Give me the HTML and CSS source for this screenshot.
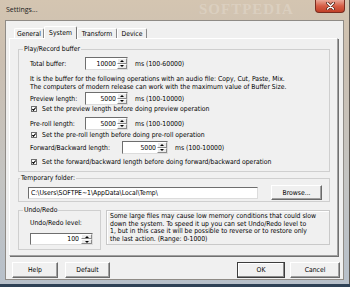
FILE: index.html
```html
<!DOCTYPE html>
<html lang="en">

<head>
    <meta charset="UTF-8">
    <title>Settings...</title>
    <link rel="stylesheet" href="styles.css">
</head>

<body>
    <div class="window">
        <div class="titlebar">
            <span class="title">Settings...</span>
            <span class="watermark">SOFTPEDIA</span>
            <span class="close">
                <svg width="9" height="8" viewBox="0 0 9 8">
                    <path d="M1.5 1 L7.5 7 M7.5 1 L1.5 7" stroke="#5a2418" stroke-width="3" stroke-linecap="round" />
                    <path d="M1.5 1 L7.5 7 M7.5 1 L1.5 7" stroke="#fff" stroke-width="1.5" stroke-linecap="round" />
                </svg>
            </span>
        </div>
        <div class="client">
            <div class="tabs">
                <span class="tab t-general">General</span>
                <span class="tab t-system on">System</span>
                <span class="tab t-transform">Transform</span>
                <span class="tab t-device">Device</span>
            </div>
            <div class="panel">
                <fieldset class="group play">
                    <legend>Play/Record buffer</legend>
                    <div class="row r1">
                        <span class="lbl">Total buffer:</span>
                        <span class="spin"><input class="num" value="10000"><span class="arrows"><b class="up"></b><b class="down"></b></span></span>
                        <span class="unit">ms (100-60000)</span>
                    </div>
                    <p class="note">It is the buffer for the following operations with an audio file: Copy, Cut, Paste, Mix.<br>The computers of modern release can work with the maximum value of Buffer Size.</p>
                    <div class="row r2">
                        <span class="lbl">Preview length:</span>
                        <span class="spin"><input class="num" value="5000"><span class="arrows"><b class="up"></b><b class="down"></b></span></span>
                        <span class="unit">ms (100-10000)</span>
                    </div>
                    <label class="check c1"><span class="box"><svg width="4" height="4" viewBox="0 0 4 4"><path d="M0.3 2 L1.5 3.3 L3.7 0.6" fill="none" stroke="#000" stroke-width="1.1" /></svg></span>Set the preview length before doing preview operation</label>
                    <div class="row r3">
                        <span class="lbl">Pre-roll length:</span>
                        <span class="spin"><input class="num" value="5000"><span class="arrows"><b class="up"></b><b class="down"></b></span></span>
                        <span class="unit">ms (100-10000)</span>
                    </div>
                    <label class="check c2"><span class="box"><svg width="4" height="4" viewBox="0 0 4 4"><path d="M0.3 2 L1.5 3.3 L3.7 0.6" fill="none" stroke="#000" stroke-width="1.1" /></svg></span>Set the pre-roll length before doing pre-roll operation</label>
                    <div class="row r4">
                        <span class="lbl wide">Forward/Backward length:</span>
                        <span class="spin"><input class="num" value="5000"><span class="arrows"><b class="up"></b><b class="down"></b></span></span>
                        <span class="unit">ms (100-10000)</span>
                    </div>
                    <label class="check c3"><span class="box"><svg width="4" height="4" viewBox="0 0 4 4"><path d="M0.3 2 L1.5 3.3 L3.7 0.6" fill="none" stroke="#000" stroke-width="1.1" /></svg></span>Set the forward/backward length before doing forward/backward operation</label>
                </fieldset>

                <fieldset class="group temp">
                    <legend>Temporary folder:</legend>
                    <div class="folder-row">
                        <input class="path" value="C:\Users\SOFTPE~1\AppData\Local\Temp\">
                        <button class="btn browse">Browse...</button>
                    </div>
                </fieldset>

                <div class="undo-wrap">
                    <fieldset class="group undo">
                        <legend>Undo/Redo</legend>
                        <div class="undo-lbl">Undo/Redo level:</div>
                        <span class="spin undo-spin"><input class="num" value="100"><span class="arrows"><b class="up"></b><b class="down"></b></span></span>
                    </fieldset>
                    <div class="info">Some large files may cause low memory conditions that could slow<br>down the system. To speed it up you can set Undo/Redo level to<br>1, but in this case it will be possible to reverse or to restore only<br>the last action. (Range: 0-1000)</div>
                </div>
            </div>
            <div class="actions">
                <button class="btn help">Help</button>
                <button class="btn default">Default</button>
                <button class="btn ok">OK</button>
                <button class="btn cancel">Cancel</button>
            </div>
        </div>
    </div>
</body>

</html>
```
FILE: styles.css
```css
* {
    margin: 0;
    padding: 0;
    box-sizing: border-box;
}

body {
    width: 350px;
    height: 287px;
    overflow: hidden;
    background: #2f4256;
    font-family: "DejaVu Sans Condensed", "DejaVu Sans", sans-serif;
    font-stretch: condensed;
    font-size: 6.8px;
    color: #000;
}

.window {
    height: 284px;
    display: flex;
    flex-direction: column;
    padding: 0 5px 4px 5px;
    background: linear-gradient(to bottom, #d4c5b1 0, #cbbfb1 60px, #c4c4c2 180px, #b7c0ca 284px);
    border-right: 1px solid #5c5650;
}

/* title bar */
.titlebar {
    position: relative;
    height: 20px;
    display: flex;
    align-items: flex-start;
}

.title {
    margin: 5px 0 0 1px;
    font-family: "Open Sans", sans-serif;
    font-stretch: normal;
    font-size: 7px;
    line-height: 9px;
    color: #1c1c1c;
}

.watermark {
    position: absolute;
    left: 194px;
    top: 1px;
    font: bold 15px "Liberation Serif", serif;
    letter-spacing: 1px;
    color: rgba(255, 255, 255, .2);
}

.close {
    margin-left: auto;
    margin-right: -1px;
    width: 30px;
    height: 13px;
    display: flex;
    align-items: center;
    justify-content: center;
    border: 1px solid #7a2c1f;
    border-top: none;
    border-radius: 0 0 4px 4px;
    background: linear-gradient(to bottom, #eaa898, #d65e46 50%, #c13f27);
}

/* client area */
.client {
    flex: 1;
    display: flex;
    flex-direction: column;
    background: #f0f0f0;
    border: 1px solid #8f8b86;
}

.tabs {
    position: relative;
    z-index: 1;
    display: flex;
    align-items: flex-end;
    height: 12px;
    margin: 5px 0 0 8px;
}

.tab {
    height: 10px;
    display: flex;
    align-items: center;
    justify-content: center;
    border: 1px solid;
    border-bottom: none;
    border-color: #fff #8a8a8a #fff #fff;
    border-radius: 2px 2px 0 0;
    white-space: nowrap;
}

.tab.on {
    height: 13px;
    margin-bottom: -1px;
    padding-bottom: 1px;
    background: #f0f0f0;
    border-color: #fff #777 #fff #fff;
}

.t-general { width: 30px; }
.t-system { width: 33px; }
.t-transform { width: 40px; }
.t-device { width: 30px; }

.panel {
    height: 218px;
    margin: 0 5px 0 3px;
    padding: 6px 7px 0 8px;
    border: 1px solid;
    border-color: #fff #a0a0a0 #a0a0a0 #fff;
    box-shadow: 1px 1px 0 #707070;
}

/* group boxes */
.group {
    min-width: 0;
    border: 1px solid #cfcfcf;
    padding: 0;
}

.group legend {
    line-height: 8px;
    padding: 0 1px;
    margin-left: 4px;
}

.play {
    padding-bottom: 5px;
}

.row {
    display: flex;
    align-items: center;
    height: 13px;
    margin-left: 11px;
    white-space: nowrap;
}

.r1 { margin-top: 4px; }
.r2 { margin-top: 1px; }
.r3 { margin-top: 4px; }
.r4 { margin-top: 2px; }

.lbl {
    width: 55px;
}

.lbl.wide {
    width: 92px;
}

.unit {
    margin-left: 7px;
}

.note {
    margin: 5px 0 0 11px;
    line-height: 8px;
    white-space: nowrap;
}

.check {
    display: flex;
    align-items: center;
    height: 8px;
    margin-left: 12px;
    white-space: nowrap;
}

.c2 { margin-top: 1px; }
.c3 { margin-top: 4px; }

.box {
    width: 6px;
    height: 6px;
    margin-right: 5px;
    display: flex;
    align-items: center;
    justify-content: center;
    background: #fff;
    border: 1px solid #6f6f6f;
}

/* spin boxes */
.spin {
    display: flex;
    width: 43px;
    height: 13px;
    background: #fff;
    border: 1px solid;
    border-color: #6e6e6e #dcdcdc #dcdcdc #6e6e6e;
}

.r4 .spin {
    width: 46px;
}

.num {
    flex: 1;
    width: 0;
    min-width: 0;
    border: none;
    outline: none;
    background: transparent;
    font: inherit;
    text-align: right;
    padding-right: 1px;
}

.arrows {
    width: 10px;
    display: flex;
    flex-direction: column;
}

.arrows b {
    flex: 1;
    display: flex;
    align-items: center;
    justify-content: center;
    background: #ebebeb;
    border: 1px solid;
    border-color: #fff #8a8a8a #8a8a8a #fff;
}

.arrows b::after {
    content: "";
    border-left: 2px solid transparent;
    border-right: 2px solid transparent;
}

.up::after {
    border-bottom: 2px solid #000;
}

.down::after {
    border-top: 2px solid #000;
}

/* temporary folder */
.temp {
    margin-top: 2px;
    padding-bottom: 1px;
}

.temp legend {
    margin-left: 1px;
}

.folder-row {
    display: flex;
    align-items: center;
    height: 15px;
    margin: 3px 0 0 9px;
}

.path {
    width: 230px;
    height: 12px;
    padding-left: 2px;
    font: inherit;
    background: #fff;
    border: 1px solid;
    border-color: #6e6e6e #dcdcdc #dcdcdc #6e6e6e;
    outline: none;
}

.btn {
    height: 16px;
    font: inherit;
    color: #000;
    background: #f0f0f0;
    border: 1px solid;
    border-color: #fff #6a6a6a #6a6a6a #fff;
    box-shadow: inset -1px -1px 0 #a0a0a0;
}

.browse {
    width: 51px;
    height: 15px;
    margin-left: 13px;
}

/* undo / redo */
.undo-wrap {
    display: flex;
    align-items: flex-start;
    gap: 5px;
    margin-top: 4px;
}

.undo {
    width: 83px;
    flex: none;
    padding-bottom: 4px;
}

.undo-lbl {
    line-height: 8px;
    margin: 5px 0 0 11px;
}

.undo-spin {
    width: 63px;
    height: 12px;
    margin: 6px 0 0 11px;
}

.undo-spin .arrows {
    width: 11px;
}

.undo-spin .num {
    padding-right: 2px;
}

.info {
    width: 224px;
    height: 35px;
    margin-top: 4px;
    padding: 2px 2px 0 3px;
    line-height: 7.5px;
    white-space: nowrap;
    border: 1px solid #c9c9c9;
    box-shadow: inset 1px 1px 0 #fff;
}

/* bottom buttons */
.actions {
    display: flex;
    margin-top: 6px;
    padding: 0 3px 0 6px;
}

.help { width: 46px; }

.default {
    width: 45px;
    margin-left: 7px;
}

.ok {
    width: 48px;
    margin-left: auto;
    border-color: #3c3c3c;
    box-shadow: inset -1px -1px 0 #8a8a8a, inset 1px 1px 0 #fff;
}

.cancel {
    width: 50px;
    margin-left: 5px;
}
```
